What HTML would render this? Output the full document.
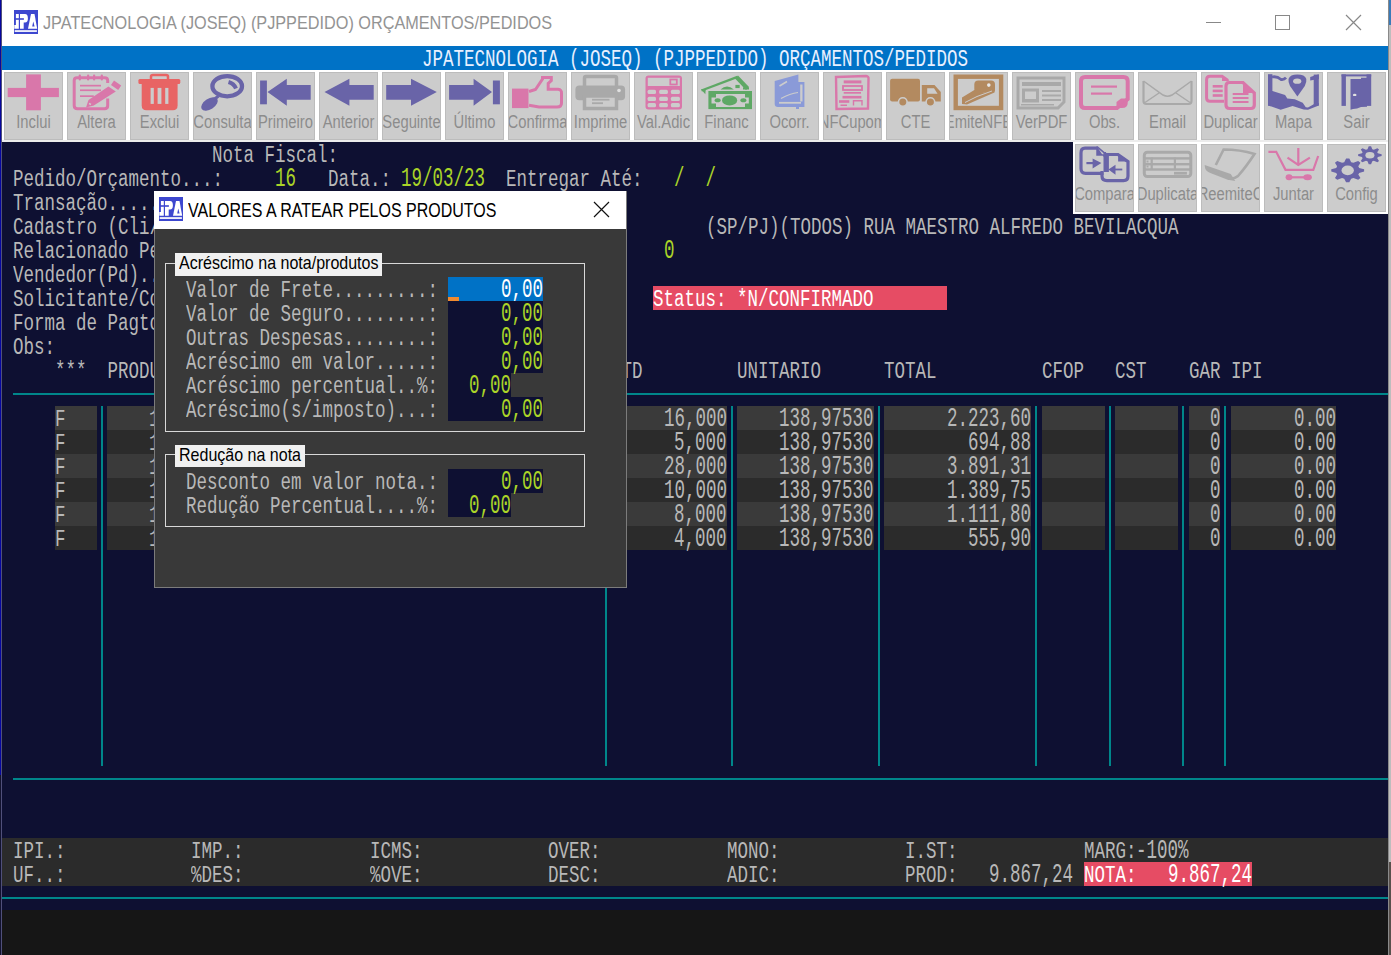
<!DOCTYPE html>
<html><head><meta charset="utf-8"><style>
*{margin:0;padding:0}
body{width:1391px;height:955px;overflow:hidden;position:relative;background:#0e1032}
.t{position:absolute;white-space:pre;font-family:"Liberation Mono",monospace;line-height:1.1328;transform-origin:0 0}
.r{position:absolute}
.s{position:absolute;white-space:pre;font-family:"Liberation Sans",sans-serif}
.lb{left:-20px;width:97px;text-align:center;font-size:18px;line-height:20px;color:#8c8c8c;transform:scaleX(0.82);transform-origin:50% 0}
</style></head>
<body>

<div class="r" style="left:0;top:0;width:1px;height:775px;background:#0606a0"></div><div class="r" style="left:0;top:775px;width:1px;height:180px;background:#12122e"></div><div class="r" style="left:1px;top:0;width:1px;height:955px;background:#50507a"></div>
<div class="r" style="left:2px;top:0;width:1386px;height:46px;background:#ffffff"></div>
<div class="r" style="left:1388px;top:0;width:1px;height:955px;background:#8a8a8a"></div>
<div class="r" style="left:1389px;top:0;width:2px;height:955px;background:#bdbdbd"></div>
<div class="r" style="left:1389px;top:0;width:2px;height:25px;background:#3a7ab8"></div><div class="r" style="left:1389px;top:862px;width:2px;height:93px;background:#58504c"></div>
<svg class="r" style="left:14px;top:10px" width="24" height="24" viewBox="0 0 24 24"><rect width="24" height="24" fill="#3d47cf"/><path d="M1.9,4 H4.8 V18.8 H0.3 V15 H1.9Z" fill="#fff"/><path d="M6,4 H11 Q13.9,4 13.9,8.3 Q13.9,12.6 11,12.6 H9.7 V18.8 H6Z" fill="#fff"/><rect x="0.9" y="8.2" width="9" height="1.6" fill="#3d47cf"/><path d="M17,4 H20.5 L23.2,18.8 H14Z" fill="#fff"/><path d="M19.3,11.5 L20.6,16.5 H18.2Z" fill="#3d47cf"/><rect x="0.7" y="20.2" width="22.2" height="1.7" fill="#fff"/></svg>
<div class="s" style="left:43px;top:12.2px;font-size:19px;line-height:22px;color:#939393;transform:scaleX(0.855);transform-origin:0 0">JPATECNOLOGIA (JOSEQ) (PJPPEDIDO) ORÇAMENTOS/PEDIDOS</div>
<div class="r" style="left:1206px;top:22px;width:15px;height:1px;background:#888"></div>
<div class="r" style="left:1275px;top:15px;width:13px;height:13px;border:1px solid #888"></div>
<svg class="r" style="left:1345px;top:14px" width="17" height="17"><path d="M1,1 L16,16 M16,1 L1,16" stroke="#888" stroke-width="1.2"/></svg>

<div class="r" style="left:2.00px;top:46.00px;width:1386.00px;height:864.00px;background:#0e1032;"></div><div class="r" style="left:2.00px;top:910.00px;width:1386.00px;height:45.00px;background:#161616;"></div><div class="r" style="left:2.00px;top:46.00px;width:1386.00px;height:24.00px;background:#0072c6;"></div><div class="t" style="left:422.00px;top:47.35px;font-size:23px;color:#e8f0ff;transform:scaleX(0.7609);">JPATECNOLOGIA (JOSEQ) (PJPPEDIDO) ORÇAMENTOS/PEDIDOS</div><div class="t" style="left:212.00px;top:143.35px;font-size:23px;color:#b8b8b8;transform:scaleX(0.7609);">Nota Fiscal:</div><div class="t" style="left:12.50px;top:167.35px;font-size:23px;color:#b8b8b8;transform:scaleX(0.7609);">Pedido/Orçamento...:</div><div class="t" style="left:275.00px;top:162.86px;font-size:28.4px;color:#aad428;transform:scaleX(0.6162);">16</div><div class="t" style="left:327.50px;top:167.35px;font-size:23px;color:#b8b8b8;transform:scaleX(0.7609);">Data.:</div><div class="t" style="left:401.00px;top:162.86px;font-size:28.4px;color:#aad428;transform:scaleX(0.6162);">19/03/23</div><div class="t" style="left:506.00px;top:167.35px;font-size:23px;color:#b8b8b8;transform:scaleX(0.7609);">Entregar Até:</div><div class="t" style="left:674.00px;top:162.86px;font-size:28.4px;color:#aad428;transform:scaleX(0.6162);">/  /</div><div class="t" style="left:12.50px;top:191.35px;font-size:23px;color:#b8b8b8;transform:scaleX(0.7609);">Transação..........:</div><div class="t" style="left:12.50px;top:215.35px;font-size:23px;color:#b8b8b8;transform:scaleX(0.7609);">Cadastro (Cli/For).:</div><div class="t" style="left:705.50px;top:215.35px;font-size:23px;color:#b8b8b8;transform:scaleX(0.7609);">(SP/PJ)(TODOS) RUA MAESTRO ALFREDO BEVILACQUA</div><div class="t" style="left:12.50px;top:239.35px;font-size:23px;color:#b8b8b8;transform:scaleX(0.7609);">Relacionado Pedido.:</div><div class="t" style="left:663.50px;top:234.86px;font-size:28.4px;color:#aad428;transform:scaleX(0.6162);">0</div><div class="t" style="left:12.50px;top:263.35px;font-size:23px;color:#b8b8b8;transform:scaleX(0.7609);">Vendedor(Pd).......:</div><div class="t" style="left:12.50px;top:287.35px;font-size:23px;color:#b8b8b8;transform:scaleX(0.7609);">Solicitante/Contato:</div><div class="r" style="left:653.00px;top:286.00px;width:294.00px;height:24.00px;background:#e64c64;"></div><div class="t" style="left:653.00px;top:287.35px;font-size:23px;color:#ffffff;transform:scaleX(0.7609);">Status: *N/CONFIRMADO</div><div class="t" style="left:12.50px;top:311.35px;font-size:23px;color:#b8b8b8;transform:scaleX(0.7609);">Forma de Pagto.....:</div><div class="t" style="left:12.50px;top:335.35px;font-size:23px;color:#b8b8b8;transform:scaleX(0.7609);">Obs:</div><div class="t" style="left:54.50px;top:359.35px;font-size:23px;color:#b8b8b8;transform:scaleX(0.7609);">***  PRODUTO</div><div class="t" style="left:611.00px;top:359.35px;font-size:23px;color:#b8b8b8;transform:scaleX(0.7609);">QTD</div><div class="t" style="left:737.00px;top:359.35px;font-size:23px;color:#b8b8b8;transform:scaleX(0.7609);">UNITARIO</div><div class="t" style="left:884.00px;top:359.35px;font-size:23px;color:#b8b8b8;transform:scaleX(0.7609);">TOTAL</div><div class="t" style="left:1041.50px;top:359.35px;font-size:23px;color:#b8b8b8;transform:scaleX(0.7609);">CFOP</div><div class="t" style="left:1115.00px;top:359.35px;font-size:23px;color:#b8b8b8;transform:scaleX(0.7609);">CST</div><div class="t" style="left:1188.50px;top:359.35px;font-size:23px;color:#b8b8b8;transform:scaleX(0.7609);">GAR IPI</div><div class="r" style="left:12.50px;top:393.00px;width:1375.50px;height:2.00px;background:#00868a;"></div><div class="r" style="left:12.50px;top:778.00px;width:1375.50px;height:2.00px;background:#00868a;"></div><div class="r" style="left:54.50px;top:406.00px;width:42.00px;height:24.00px;background:#3a3a3a;"></div><div class="r" style="left:107.00px;top:406.00px;width:493.50px;height:24.00px;background:#3a3a3a;"></div><div class="r" style="left:611.00px;top:406.00px;width:115.50px;height:24.00px;background:#3a3a3a;"></div><div class="r" style="left:737.00px;top:406.00px;width:136.50px;height:24.00px;background:#3a3a3a;"></div><div class="r" style="left:884.00px;top:406.00px;width:147.00px;height:24.00px;background:#3a3a3a;"></div><div class="r" style="left:1041.50px;top:406.00px;width:63.00px;height:24.00px;background:#3a3a3a;"></div><div class="r" style="left:1115.00px;top:406.00px;width:63.00px;height:24.00px;background:#3a3a3a;"></div><div class="r" style="left:1188.50px;top:406.00px;width:31.50px;height:24.00px;background:#3a3a3a;"></div><div class="r" style="left:1230.50px;top:406.00px;width:105.00px;height:24.00px;background:#3a3a3a;"></div><div class="t" style="left:54.50px;top:407.35px;font-size:23px;color:#b8b8b8;transform:scaleX(0.7609);">F</div><div class="t" style="left:149.00px;top:407.35px;font-size:23px;color:#b8b8b8;transform:scaleX(0.7609);">1</div><div class="t" style="left:663.50px;top:402.86px;font-size:28.4px;color:#b8b8b8;transform:scaleX(0.6162);">16,000</div><div class="t" style="left:779.00px;top:402.86px;font-size:28.4px;color:#b8b8b8;transform:scaleX(0.6162);">138,97530</div><div class="t" style="left:947.00px;top:402.86px;font-size:28.4px;color:#b8b8b8;transform:scaleX(0.6162);">2.223,60</div><div class="t" style="left:1209.50px;top:402.86px;font-size:28.4px;color:#b8b8b8;transform:scaleX(0.6162);">0</div><div class="t" style="left:1293.50px;top:402.86px;font-size:28.4px;color:#b8b8b8;transform:scaleX(0.6162);">0.00</div><div class="r" style="left:54.50px;top:430.00px;width:42.00px;height:24.00px;background:#2b2b2b;"></div><div class="r" style="left:107.00px;top:430.00px;width:493.50px;height:24.00px;background:#2b2b2b;"></div><div class="r" style="left:611.00px;top:430.00px;width:115.50px;height:24.00px;background:#2b2b2b;"></div><div class="r" style="left:737.00px;top:430.00px;width:136.50px;height:24.00px;background:#2b2b2b;"></div><div class="r" style="left:884.00px;top:430.00px;width:147.00px;height:24.00px;background:#2b2b2b;"></div><div class="r" style="left:1041.50px;top:430.00px;width:63.00px;height:24.00px;background:#2b2b2b;"></div><div class="r" style="left:1115.00px;top:430.00px;width:63.00px;height:24.00px;background:#2b2b2b;"></div><div class="r" style="left:1188.50px;top:430.00px;width:31.50px;height:24.00px;background:#2b2b2b;"></div><div class="r" style="left:1230.50px;top:430.00px;width:105.00px;height:24.00px;background:#2b2b2b;"></div><div class="t" style="left:54.50px;top:431.35px;font-size:23px;color:#b8b8b8;transform:scaleX(0.7609);">F</div><div class="t" style="left:149.00px;top:431.35px;font-size:23px;color:#b8b8b8;transform:scaleX(0.7609);">1</div><div class="t" style="left:674.00px;top:426.86px;font-size:28.4px;color:#b8b8b8;transform:scaleX(0.6162);">5,000</div><div class="t" style="left:779.00px;top:426.86px;font-size:28.4px;color:#b8b8b8;transform:scaleX(0.6162);">138,97530</div><div class="t" style="left:968.00px;top:426.86px;font-size:28.4px;color:#b8b8b8;transform:scaleX(0.6162);">694,88</div><div class="t" style="left:1209.50px;top:426.86px;font-size:28.4px;color:#b8b8b8;transform:scaleX(0.6162);">0</div><div class="t" style="left:1293.50px;top:426.86px;font-size:28.4px;color:#b8b8b8;transform:scaleX(0.6162);">0.00</div><div class="r" style="left:54.50px;top:454.00px;width:42.00px;height:24.00px;background:#3a3a3a;"></div><div class="r" style="left:107.00px;top:454.00px;width:493.50px;height:24.00px;background:#3a3a3a;"></div><div class="r" style="left:611.00px;top:454.00px;width:115.50px;height:24.00px;background:#3a3a3a;"></div><div class="r" style="left:737.00px;top:454.00px;width:136.50px;height:24.00px;background:#3a3a3a;"></div><div class="r" style="left:884.00px;top:454.00px;width:147.00px;height:24.00px;background:#3a3a3a;"></div><div class="r" style="left:1041.50px;top:454.00px;width:63.00px;height:24.00px;background:#3a3a3a;"></div><div class="r" style="left:1115.00px;top:454.00px;width:63.00px;height:24.00px;background:#3a3a3a;"></div><div class="r" style="left:1188.50px;top:454.00px;width:31.50px;height:24.00px;background:#3a3a3a;"></div><div class="r" style="left:1230.50px;top:454.00px;width:105.00px;height:24.00px;background:#3a3a3a;"></div><div class="t" style="left:54.50px;top:455.35px;font-size:23px;color:#b8b8b8;transform:scaleX(0.7609);">F</div><div class="t" style="left:149.00px;top:455.35px;font-size:23px;color:#b8b8b8;transform:scaleX(0.7609);">1</div><div class="t" style="left:663.50px;top:450.86px;font-size:28.4px;color:#b8b8b8;transform:scaleX(0.6162);">28,000</div><div class="t" style="left:779.00px;top:450.86px;font-size:28.4px;color:#b8b8b8;transform:scaleX(0.6162);">138,97530</div><div class="t" style="left:947.00px;top:450.86px;font-size:28.4px;color:#b8b8b8;transform:scaleX(0.6162);">3.891,31</div><div class="t" style="left:1209.50px;top:450.86px;font-size:28.4px;color:#b8b8b8;transform:scaleX(0.6162);">0</div><div class="t" style="left:1293.50px;top:450.86px;font-size:28.4px;color:#b8b8b8;transform:scaleX(0.6162);">0.00</div><div class="r" style="left:54.50px;top:478.00px;width:42.00px;height:24.00px;background:#2b2b2b;"></div><div class="r" style="left:107.00px;top:478.00px;width:493.50px;height:24.00px;background:#2b2b2b;"></div><div class="r" style="left:611.00px;top:478.00px;width:115.50px;height:24.00px;background:#2b2b2b;"></div><div class="r" style="left:737.00px;top:478.00px;width:136.50px;height:24.00px;background:#2b2b2b;"></div><div class="r" style="left:884.00px;top:478.00px;width:147.00px;height:24.00px;background:#2b2b2b;"></div><div class="r" style="left:1041.50px;top:478.00px;width:63.00px;height:24.00px;background:#2b2b2b;"></div><div class="r" style="left:1115.00px;top:478.00px;width:63.00px;height:24.00px;background:#2b2b2b;"></div><div class="r" style="left:1188.50px;top:478.00px;width:31.50px;height:24.00px;background:#2b2b2b;"></div><div class="r" style="left:1230.50px;top:478.00px;width:105.00px;height:24.00px;background:#2b2b2b;"></div><div class="t" style="left:54.50px;top:479.35px;font-size:23px;color:#b8b8b8;transform:scaleX(0.7609);">F</div><div class="t" style="left:149.00px;top:479.35px;font-size:23px;color:#b8b8b8;transform:scaleX(0.7609);">1</div><div class="t" style="left:663.50px;top:474.86px;font-size:28.4px;color:#b8b8b8;transform:scaleX(0.6162);">10,000</div><div class="t" style="left:779.00px;top:474.86px;font-size:28.4px;color:#b8b8b8;transform:scaleX(0.6162);">138,97530</div><div class="t" style="left:947.00px;top:474.86px;font-size:28.4px;color:#b8b8b8;transform:scaleX(0.6162);">1.389,75</div><div class="t" style="left:1209.50px;top:474.86px;font-size:28.4px;color:#b8b8b8;transform:scaleX(0.6162);">0</div><div class="t" style="left:1293.50px;top:474.86px;font-size:28.4px;color:#b8b8b8;transform:scaleX(0.6162);">0.00</div><div class="r" style="left:54.50px;top:502.00px;width:42.00px;height:24.00px;background:#3a3a3a;"></div><div class="r" style="left:107.00px;top:502.00px;width:493.50px;height:24.00px;background:#3a3a3a;"></div><div class="r" style="left:611.00px;top:502.00px;width:115.50px;height:24.00px;background:#3a3a3a;"></div><div class="r" style="left:737.00px;top:502.00px;width:136.50px;height:24.00px;background:#3a3a3a;"></div><div class="r" style="left:884.00px;top:502.00px;width:147.00px;height:24.00px;background:#3a3a3a;"></div><div class="r" style="left:1041.50px;top:502.00px;width:63.00px;height:24.00px;background:#3a3a3a;"></div><div class="r" style="left:1115.00px;top:502.00px;width:63.00px;height:24.00px;background:#3a3a3a;"></div><div class="r" style="left:1188.50px;top:502.00px;width:31.50px;height:24.00px;background:#3a3a3a;"></div><div class="r" style="left:1230.50px;top:502.00px;width:105.00px;height:24.00px;background:#3a3a3a;"></div><div class="t" style="left:54.50px;top:503.35px;font-size:23px;color:#b8b8b8;transform:scaleX(0.7609);">F</div><div class="t" style="left:149.00px;top:503.35px;font-size:23px;color:#b8b8b8;transform:scaleX(0.7609);">1</div><div class="t" style="left:674.00px;top:498.86px;font-size:28.4px;color:#b8b8b8;transform:scaleX(0.6162);">8,000</div><div class="t" style="left:779.00px;top:498.86px;font-size:28.4px;color:#b8b8b8;transform:scaleX(0.6162);">138,97530</div><div class="t" style="left:947.00px;top:498.86px;font-size:28.4px;color:#b8b8b8;transform:scaleX(0.6162);">1.111,80</div><div class="t" style="left:1209.50px;top:498.86px;font-size:28.4px;color:#b8b8b8;transform:scaleX(0.6162);">0</div><div class="t" style="left:1293.50px;top:498.86px;font-size:28.4px;color:#b8b8b8;transform:scaleX(0.6162);">0.00</div><div class="r" style="left:54.50px;top:526.00px;width:42.00px;height:24.00px;background:#2b2b2b;"></div><div class="r" style="left:107.00px;top:526.00px;width:493.50px;height:24.00px;background:#2b2b2b;"></div><div class="r" style="left:611.00px;top:526.00px;width:115.50px;height:24.00px;background:#2b2b2b;"></div><div class="r" style="left:737.00px;top:526.00px;width:136.50px;height:24.00px;background:#2b2b2b;"></div><div class="r" style="left:884.00px;top:526.00px;width:147.00px;height:24.00px;background:#2b2b2b;"></div><div class="r" style="left:1041.50px;top:526.00px;width:63.00px;height:24.00px;background:#2b2b2b;"></div><div class="r" style="left:1115.00px;top:526.00px;width:63.00px;height:24.00px;background:#2b2b2b;"></div><div class="r" style="left:1188.50px;top:526.00px;width:31.50px;height:24.00px;background:#2b2b2b;"></div><div class="r" style="left:1230.50px;top:526.00px;width:105.00px;height:24.00px;background:#2b2b2b;"></div><div class="t" style="left:54.50px;top:527.35px;font-size:23px;color:#b8b8b8;transform:scaleX(0.7609);">F</div><div class="t" style="left:149.00px;top:527.35px;font-size:23px;color:#b8b8b8;transform:scaleX(0.7609);">1</div><div class="t" style="left:674.00px;top:522.86px;font-size:28.4px;color:#b8b8b8;transform:scaleX(0.6162);">4,000</div><div class="t" style="left:779.00px;top:522.86px;font-size:28.4px;color:#b8b8b8;transform:scaleX(0.6162);">138,97530</div><div class="t" style="left:968.00px;top:522.86px;font-size:28.4px;color:#b8b8b8;transform:scaleX(0.6162);">555,90</div><div class="t" style="left:1209.50px;top:522.86px;font-size:28.4px;color:#b8b8b8;transform:scaleX(0.6162);">0</div><div class="t" style="left:1293.50px;top:522.86px;font-size:28.4px;color:#b8b8b8;transform:scaleX(0.6162);">0.00</div><div class="r" style="left:100.75px;top:406.00px;width:2.00px;height:360.00px;background:#00868a;"></div><div class="r" style="left:604.75px;top:406.00px;width:2.00px;height:360.00px;background:#00868a;"></div><div class="r" style="left:730.75px;top:406.00px;width:2.00px;height:360.00px;background:#00868a;"></div><div class="r" style="left:877.75px;top:406.00px;width:2.00px;height:360.00px;background:#00868a;"></div><div class="r" style="left:1035.25px;top:406.00px;width:2.00px;height:360.00px;background:#00868a;"></div><div class="r" style="left:1108.75px;top:406.00px;width:2.00px;height:360.00px;background:#00868a;"></div><div class="r" style="left:1182.25px;top:406.00px;width:2.00px;height:360.00px;background:#00868a;"></div><div class="r" style="left:1224.25px;top:406.00px;width:2.00px;height:360.00px;background:#00868a;"></div><div class="r" style="left:2.00px;top:838.00px;width:1386.00px;height:48.00px;background:#2b2b2b;"></div><div class="r" style="left:2.00px;top:897.00px;width:1386.00px;height:2.00px;background:#00868a;"></div><div class="t" style="left:12.50px;top:839.35px;font-size:23px;color:#b8b8b8;transform:scaleX(0.7609);">IPI.:</div><div class="t" style="left:12.50px;top:863.35px;font-size:23px;color:#b8b8b8;transform:scaleX(0.7609);">UF..:</div><div class="t" style="left:191.00px;top:839.35px;font-size:23px;color:#b8b8b8;transform:scaleX(0.7609);">IMP.:</div><div class="t" style="left:191.00px;top:863.35px;font-size:23px;color:#b8b8b8;transform:scaleX(0.7609);">%DES:</div><div class="t" style="left:369.50px;top:839.35px;font-size:23px;color:#b8b8b8;transform:scaleX(0.7609);">ICMS:</div><div class="t" style="left:369.50px;top:863.35px;font-size:23px;color:#b8b8b8;transform:scaleX(0.7609);">%OVE:</div><div class="t" style="left:548.00px;top:839.35px;font-size:23px;color:#b8b8b8;transform:scaleX(0.7609);">OVER:</div><div class="t" style="left:548.00px;top:863.35px;font-size:23px;color:#b8b8b8;transform:scaleX(0.7609);">DESC:</div><div class="t" style="left:726.50px;top:839.35px;font-size:23px;color:#b8b8b8;transform:scaleX(0.7609);">MONO:</div><div class="t" style="left:726.50px;top:863.35px;font-size:23px;color:#b8b8b8;transform:scaleX(0.7609);">ADIC:</div><div class="t" style="left:905.00px;top:839.35px;font-size:23px;color:#b8b8b8;transform:scaleX(0.7609);">I.ST:</div><div class="t" style="left:905.00px;top:863.35px;font-size:23px;color:#b8b8b8;transform:scaleX(0.7609);">PROD:</div><div class="t" style="left:1083.50px;top:839.35px;font-size:23px;color:#b8b8b8;transform:scaleX(0.7609);">MARG:</div><div class="t" style="left:1136.00px;top:834.86px;font-size:28.4px;color:#b8b8b8;transform:scaleX(0.6162);">-100%</div><div class="t" style="left:989.00px;top:858.86px;font-size:28.4px;color:#b8b8b8;transform:scaleX(0.6162);">9.867,24</div><div class="r" style="left:1083.50px;top:862.00px;width:168.00px;height:24.00px;background:#e64c64;"></div><div class="t" style="left:1083.50px;top:863.35px;font-size:23px;color:#ffffff;transform:scaleX(0.7609);">NOTA:</div><div class="t" style="left:1167.50px;top:858.86px;font-size:28.4px;color:#ffffff;transform:scaleX(0.6162);">9.867,24</div>
<div class="r" style="left:2px;top:70px;width:1386px;height:72px;background:#ffffff"></div><div class="r" style="left:2px;top:140px;width:1386px;height:2px;background:#ececec"></div><div class="r" style="left:1073px;top:142px;width:315px;height:72px;background:#ffffff"></div><div class="r" style="left:4px;top:72px;width:57px;height:66px;background:#cccccc;border:1px solid #bcbcbc;overflow:hidden"><div class="s lb" style="top:39.1px">Inclui</div></div><div class="r" style="left:67px;top:72px;width:57px;height:66px;background:#cccccc;border:1px solid #bcbcbc;overflow:hidden"><div class="s lb" style="top:39.1px">Altera</div></div><div class="r" style="left:130px;top:72px;width:57px;height:66px;background:#cccccc;border:1px solid #bcbcbc;overflow:hidden"><div class="s lb" style="top:39.1px">Exclui</div></div><div class="r" style="left:193px;top:72px;width:57px;height:66px;background:#cccccc;border:1px solid #bcbcbc;overflow:hidden"><div class="s lb" style="top:39.1px">Consulta</div></div><div class="r" style="left:256px;top:72px;width:57px;height:66px;background:#cccccc;border:1px solid #bcbcbc;overflow:hidden"><div class="s lb" style="top:39.1px">Primeiro</div></div><div class="r" style="left:319px;top:72px;width:57px;height:66px;background:#cccccc;border:1px solid #bcbcbc;overflow:hidden"><div class="s lb" style="top:39.1px">Anterior</div></div><div class="r" style="left:382px;top:72px;width:57px;height:66px;background:#cccccc;border:1px solid #bcbcbc;overflow:hidden"><div class="s lb" style="top:39.1px">Seguinte</div></div><div class="r" style="left:445px;top:72px;width:57px;height:66px;background:#cccccc;border:1px solid #bcbcbc;overflow:hidden"><div class="s lb" style="top:39.1px">Último</div></div><div class="r" style="left:508px;top:72px;width:57px;height:66px;background:#cccccc;border:1px solid #bcbcbc;overflow:hidden"><div class="s lb" style="top:39.1px">Confirma</div></div><div class="r" style="left:571px;top:72px;width:57px;height:66px;background:#cccccc;border:1px solid #bcbcbc;overflow:hidden"><div class="s lb" style="top:39.1px">Imprime</div></div><div class="r" style="left:634px;top:72px;width:57px;height:66px;background:#cccccc;border:1px solid #bcbcbc;overflow:hidden"><div class="s lb" style="top:39.1px">Val.Adic</div></div><div class="r" style="left:697px;top:72px;width:57px;height:66px;background:#cccccc;border:1px solid #bcbcbc;overflow:hidden"><div class="s lb" style="top:39.1px">Financ</div></div><div class="r" style="left:760px;top:72px;width:57px;height:66px;background:#cccccc;border:1px solid #bcbcbc;overflow:hidden"><div class="s lb" style="top:39.1px">Ocorr.</div></div><div class="r" style="left:823px;top:72px;width:57px;height:66px;background:#cccccc;border:1px solid #bcbcbc;overflow:hidden"><div class="s lb" style="top:39.1px">NFCupom</div></div><div class="r" style="left:886px;top:72px;width:57px;height:66px;background:#cccccc;border:1px solid #bcbcbc;overflow:hidden"><div class="s lb" style="top:39.1px">CTE</div></div><div class="r" style="left:949px;top:72px;width:57px;height:66px;background:#cccccc;border:1px solid #bcbcbc;overflow:hidden"><div class="s lb" style="top:39.1px">EmiteNFE</div></div><div class="r" style="left:1012px;top:72px;width:57px;height:66px;background:#cccccc;border:1px solid #bcbcbc;overflow:hidden"><div class="s lb" style="top:39.1px">VerPDF</div></div><div class="r" style="left:1075px;top:72px;width:57px;height:66px;background:#cccccc;border:1px solid #bcbcbc;overflow:hidden"><div class="s lb" style="top:39.1px">Obs.</div></div><div class="r" style="left:1138px;top:72px;width:57px;height:66px;background:#cccccc;border:1px solid #bcbcbc;overflow:hidden"><div class="s lb" style="top:39.1px">Email</div></div><div class="r" style="left:1201px;top:72px;width:57px;height:66px;background:#cccccc;border:1px solid #bcbcbc;overflow:hidden"><div class="s lb" style="top:39.1px">Duplicar</div></div><div class="r" style="left:1264px;top:72px;width:57px;height:66px;background:#cccccc;border:1px solid #bcbcbc;overflow:hidden"><div class="s lb" style="top:39.1px">Mapa</div></div><div class="r" style="left:1327px;top:72px;width:57px;height:66px;background:#cccccc;border:1px solid #bcbcbc;overflow:hidden"><div class="s lb" style="top:39.1px">Sair</div></div><div class="r" style="left:1075px;top:144px;width:57px;height:66px;background:#cccccc;border:1px solid #bcbcbc;overflow:hidden"><div class="s lb" style="top:39.1px">Compara</div></div><div class="r" style="left:1138px;top:144px;width:57px;height:66px;background:#cccccc;border:1px solid #bcbcbc;overflow:hidden"><div class="s lb" style="top:39.1px">Duplicata</div></div><div class="r" style="left:1201px;top:144px;width:57px;height:66px;background:#cccccc;border:1px solid #bcbcbc;overflow:hidden"><div class="s lb" style="top:39.1px">ReemiteC</div></div><div class="r" style="left:1264px;top:144px;width:57px;height:66px;background:#cccccc;border:1px solid #bcbcbc;overflow:hidden"><div class="s lb" style="top:39.1px">Juntar</div></div><div class="r" style="left:1327px;top:144px;width:57px;height:66px;background:#cccccc;border:1px solid #bcbcbc;overflow:hidden"><div class="s lb" style="top:39.1px">Config</div></div><svg class="r" style="left:0;top:0" width="1391" height="955" viewBox="0 0 1391 955"><rect x="7.7" y="87.9" width="51.2" height="9.2" fill="#d977aa"/><rect x="26.1" y="74.4" width="14.8" height="35.9" fill="#d977aa"/><path d="M107.7,83 V80.5 Q107.7,77.7 104.5,77.7 H77 Q74.2,77.7 74.2,80.5 V105.5 Q74.2,108.8 77.5,108.8 H104.5 Q107.7,108.8 107.7,105.5 V98.4" fill="none" stroke="#d977aa" stroke-width="3"/><rect x="78.7" y="74.6" width="2.2" height="5.8" rx="1" fill="#d977aa"/><rect x="87.0" y="74.6" width="2.2" height="5.8" rx="1" fill="#d977aa"/><rect x="93.0" y="74.6" width="2.2" height="5.8" rx="1" fill="#d977aa"/><rect x="100.7" y="74.6" width="2.2" height="5.8" rx="1" fill="#d977aa"/><rect x="80" y="84.8" width="21" height="1.7" fill="#d977aa"/><rect x="80" y="89.4" width="21" height="1.7" fill="#d977aa"/><rect x="80" y="95.3" width="13.8" height="1.7" fill="#d977aa"/><polygon points="86,107.5 88.5,100 108.4,86.5 115.8,91.4 93.8,105.6" fill="#d977aa"/><polygon points="111,85 114,80.5 121.2,85.5 118.2,90" fill="#d977aa"/><path d="M89,103.5 L91,104.5" stroke="#cccccc" stroke-width="1.4"/><path d="M151,79.5 V76.5 Q151,75 153,75 H166 Q168,75 168,76.5 V79.5" fill="none" stroke="#e86464" stroke-width="2.5"/><rect x="138.4" y="79" width="41.9" height="5" rx="1.5" fill="#e86464"/><path d="M141.7,83.5 H177.6 V105.5 Q177.6,110.3 172.8,110.3 H146.5 Q141.7,110.3 141.7,105.5 Z" fill="#e86464"/><rect x="150.6" y="87.9" width="3.2" height="16" fill="#cccccc"/><rect x="157.6" y="87.9" width="3.8" height="16" fill="#cccccc"/><rect x="165.2" y="87.9" width="3.2" height="16" fill="#cccccc"/><ellipse cx="227.2" cy="86.2" rx="14.8" ry="10.1" fill="none" stroke="#6964a8" stroke-width="4.3"/><path d="M228.5,82 Q234,83.5 236,88.5" fill="none" stroke="#6964a8" stroke-width="4"/><ellipse cx="209.5" cy="104" rx="9.3" ry="5.3" transform="rotate(-33 209.5 104)" fill="#6964a8"/><path d="M214,99.5 L218.5,96" stroke="#6964a8" stroke-width="3"/><rect x="260.1" y="80.5" width="6.8" height="23.8" fill="#6964a8"/><polygon points="267.5,92 286.8,78.7 286.8,85 310.7,85 310.7,99.7 286.8,99.7 286.8,105.7" fill="#6964a8"/><polygon points="324.5,92 349.4,78.7 349.4,85 373.7,85 373.7,99.7 349.4,99.7 349.4,105.7" fill="#6964a8"/><polygon points="386.2,85 411,85 411,78.7 436.8,92 411,105.7 411,99.7 386.2,99.7" fill="#6964a8"/><polygon points="449.1,85 473.6,85 473.6,78.7 492,92 473.6,105.7 473.6,99.7 449.1,99.7" fill="#6964a8"/><rect x="492.9" y="80.5" width="7" height="23.8" fill="#6964a8"/><rect x="512" y="88.6" width="16.5" height="19.5" fill="#d977aa"/><path d="M529,91.5 L535.5,89.5 L542.5,79 V77.6 H551.3 V80.5 L548.2,83.5 V89.3 H558 Q562,89.8 561.5,93.5 V103 Q561.5,107 557,107 H539 L529,105.2" fill="none" stroke="#d977aa" stroke-width="3"/><path d="M584.5,87 V78 Q584.5,76.5 586,76.5 H614.5 Q616.5,76.5 616.5,78 V87" fill="none" stroke="#a9a9a9" stroke-width="3.5"/><rect x="575.4" y="85.5" width="49.7" height="14.7" rx="4" fill="#a9a9a9"/><circle cx="619" cy="90.5" r="1.8" fill="#e0e0e0"/><rect x="584.5" y="96" width="32" height="12.5" fill="#cccccc" stroke="#a9a9a9" stroke-width="3.5"/><rect x="592" y="98.8" width="17.5" height="1.8" fill="#a9a9a9"/><rect x="592" y="102.3" width="11" height="1.8" fill="#a9a9a9"/><rect x="645.5" y="75.5" width="36.5" height="34" rx="3" fill="#d977aa"/><rect x="647.8" y="77.8" width="32" height="8.2" fill="#cccccc"/><rect x="670.3" y="79.5" width="6.5" height="5" fill="none" stroke="#d977aa" stroke-width="1.8"/><rect x="647.6" y="89.7" width="8.4" height="4.2" rx="1.5" fill="#cccccc"/><rect x="659.2" y="89.7" width="8.7" height="4.2" rx="1.5" fill="#cccccc"/><rect x="670.9" y="89.7" width="9" height="4.2" rx="1.5" fill="#cccccc"/><rect x="647.6" y="96.8" width="8.4" height="4.2" rx="1.5" fill="#cccccc"/><rect x="659.2" y="96.8" width="8.7" height="4.2" rx="1.5" fill="#cccccc"/><rect x="670.9" y="96.8" width="9" height="4.2" rx="1.5" fill="#cccccc"/><rect x="647.6" y="103.1" width="8.4" height="4.2" rx="1.5" fill="#cccccc"/><rect x="659.2" y="103.1" width="8.7" height="4.2" rx="1.5" fill="#cccccc"/><rect x="670.9" y="103.1" width="9" height="4.2" rx="1.5" fill="#cccccc"/><path d="M701.5,90.5 L737.5,76.8" stroke="#5ea865" stroke-width="2.4"/><path d="M736.5,77 L747.5,88.5" stroke="#5ea865" stroke-width="4.2"/><rect x="743" y="87.3" width="6" height="2.2" fill="#5ea865"/><polygon points="701,89.3 705.8,89 705.3,94.2" fill="#5ea865"/><path d="M720.5,89.6 Q727,83.3 733.8,89.6 Z" fill="#5ea865"/><rect x="735.4" y="84.9" width="4.3" height="3.2" fill="#5ea865"/><rect x="708.4" y="91" width="43.6" height="18.1" fill="#5ea865"/><path d="M711.5,97.5 H716 V94 H745 V97.5 H748.8 V103.5 H745 V107 H716 V103.5 H711.5 Z" fill="#cccccc"/><ellipse cx="729.6" cy="100.4" rx="7.6" ry="5" fill="#5ea865"/><ellipse cx="717.6" cy="100.3" rx="3" ry="2" fill="#5ea865"/><ellipse cx="743.4" cy="100.3" rx="3" ry="2" fill="#5ea865"/><path d="M774.7,81 L798.4,74.5 V107 H778 Q774.7,107 774.7,104 Z" fill="#8a9ad8"/><rect x="798" y="82" width="6.4" height="25" fill="#8a9ad8"/><rect x="800.2" y="84.5" width="2.3" height="17" fill="#cccccc"/><path d="M779,102.8 H801" stroke="#cccccc" stroke-width="1.8"/><path d="M779.5,86 L787,81.5" stroke="#cccccc" stroke-width="1.6"/><path d="M781,98.5 Q790,93.5 798,92.5" fill="none" stroke="#cccccc" stroke-width="1.2"/><rect x="796" y="107" width="3" height="2" fill="#8a9ad8"/><path d="M836,77 L866,76 Q869,76.5 868.5,79 L868,108.5 L836.5,109 Z" fill="none" stroke="#d977aa" stroke-width="2.4"/><rect x="843.7" y="80.4" width="17.7" height="3" fill="#d977aa"/><rect x="843" y="86" width="19" height="4" fill="none" stroke="#d977aa" stroke-width="1.8"/><rect x="843.7" y="92" width="17.3" height="1.7" fill="#d977aa"/><rect x="842.5" y="95.9" width="18.9" height="2.6" fill="#d977aa"/><rect x="839" y="100.2" width="10.3" height="2.6" fill="#d977aa"/><rect x="840.5" y="104.5" width="6.5" height="1.5" fill="#d977aa"/><path d="M853.5,105.5 V100.8 H862 V105.5" fill="none" stroke="#d977aa" stroke-width="1.4"/><rect x="890.1" y="78.8" width="29.9" height="22.6" rx="2" fill="#b38a60"/><path d="M921.8,85.1 H934.5 L940.8,92 V101.4 H921.8 Z" fill="#b38a60"/><path d="M927.2,88.3 H934 L937.6,93.7 H927.2 Z" fill="#cccccc"/><circle cx="902.8" cy="102" r="4.3" fill="#b38a60" stroke="#cccccc" stroke-width="1.6"/><circle cx="930.4" cy="102" r="4.3" fill="#b38a60" stroke="#cccccc" stroke-width="1.6"/><rect x="955.7" y="76.7" width="45.4" height="31.3" fill="none" stroke="#b38a60" stroke-width="4.4"/><rect x="974.3" y="80.6" width="20.7" height="12.2" rx="4" fill="#b38a60"/><polygon points="962,97.5 976,89 984,92.8 995,89 994.5,92.5 983,97.5 967,104.5 962,104" fill="#b38a60"/><circle cx="988.8" cy="85.1" r="1.8" fill="#e8e8e8"/><path d="M965,102.5 L977,96.5 L992,91" fill="none" stroke="#cccccc" stroke-width="1"/><path d="M1018,78 H1064 V102 L1058,108 H1018 Z" fill="none" stroke="#a9a9a9" stroke-width="3"/><rect x="1022" y="82" width="39" height="4" fill="#a9a9a9"/><rect x="1022" y="88.5" width="17" height="14" fill="#a9a9a9"/><rect x="1025" y="91.5" width="11" height="7.5" fill="#cccccc"/><rect x="1042" y="90" width="19" height="2" fill="#a9a9a9"/><rect x="1042" y="94.5" width="19" height="2" fill="#a9a9a9"/><rect x="1042" y="99" width="19" height="2" fill="#a9a9a9"/><rect x="1021" y="104" width="33" height="1.5" fill="#a9a9a9"/><path d="M1085,77 H1123.5 Q1127.7,77 1127.7,81 V99 L1117,108 H1085 Q1081,108 1081,104 V81 Q1081,77 1085,77 Z" fill="none" stroke="#d977aa" stroke-width="4"/><path d="M1127.7,99 V103 Q1127.7,108 1122,108 H1117 Z" fill="#d977aa"/><polygon points="1127,98.5 1116.5,108 1116.5,102 1121,98.5" fill="#d977aa"/><rect x="1091" y="85.5" width="26" height="2.2" fill="#d977aa"/><rect x="1091" y="92.5" width="21" height="2.2" fill="#d977aa"/><path d="M1143.5,81 V101 Q1143.5,104 1146.5,104 H1188.5 Q1191.5,104 1191.5,101 V81" fill="none" stroke="#a9a9a9" stroke-width="2.2"/><path d="M1143.5,81 L1163,95 Q1167.5,97.5 1172,95 L1191.5,81 M1145,102.5 L1159,93 M1190,102.5 L1176,93" fill="none" stroke="#a9a9a9" stroke-width="1.5"/><path d="M1224,101.3 H1209.8 Q1206.6,101.3 1206.6,98 V79.5 Q1206.6,76.3 1209.8,76.3 H1222 L1228,80.5" fill="none" stroke="#d977aa" stroke-width="3"/><polygon points="1222,75 1229.5,81 1222,81" fill="#d977aa"/><rect x="1212.7" y="85" width="10" height="2.6" fill="#d977aa"/><rect x="1212.7" y="89.6" width="10" height="2.6" fill="#d977aa"/><rect x="1212.7" y="94.2" width="10" height="2.6" fill="#d977aa"/><path d="M1226,86 Q1226,82.5 1229.5,82.5 H1243 L1254.3,93 V105 Q1254.3,108.5 1250.8,108.5 H1229.5 Q1226,108.5 1226,105 Z" fill="none" stroke="#d977aa" stroke-width="3.2"/><polygon points="1243,82.5 1254.3,93 1243,93" fill="#d977aa"/><rect x="1232.7" y="93" width="15.8" height="2" fill="#d977aa"/><rect x="1232.7" y="97" width="15.8" height="2" fill="#d977aa"/><rect x="1232.7" y="101" width="15.8" height="2" fill="#d977aa"/><rect x="1268" y="74.2" width="4.4" height="31.5" fill="#6964a8"/><path d="M1272,77 Q1277,76 1281,79.5 Q1284,80 1286,77.7" fill="none" stroke="#6964a8" stroke-width="2.8"/><polygon points="1268,90.9 1272.4,90.9 1285.1,94.9 1287.3,98.4 1294.8,99.3 1302.7,102.8 1305.8,107.2 1308,107.6 1314.6,103.7 1318.8,103 1318.8,105.4 1308,109.8 1303.6,109.4 1292.6,105.9 1280.7,109.8 1268,105.4" fill="#6964a8"/><rect x="1313.7" y="74.6" width="5.1" height="31" fill="#6964a8"/><polygon points="1310.2,77 1318.8,74.2 1318.8,79 1310.2,80.5" fill="#6964a8"/><path d="M1297.4,96.6 L1290,86 Q1288,82 1288.5,79 Q1290,74.6 1297.4,74.6 Q1304.8,74.6 1306.3,79 Q1306.8,82 1304.8,86 Z" fill="#6964a8"/><ellipse cx="1297.2" cy="81.2" rx="4.1" ry="2.6" fill="#cccccc"/><rect x="1341.5" y="74.4" width="4.4" height="31.5" fill="#6964a8"/><rect x="1341.5" y="74.4" width="29.7" height="2" fill="#6964a8"/><rect x="1366.5" y="74.4" width="4.7" height="31.5" fill="#6964a8"/><polygon points="1350.5,79 1361,79 1361,77.7 1367,77.7 1367,106.8 1361,107 1357,108.5 1353,109 1350.5,109.8" fill="#6964a8"/><ellipse cx="1354.7" cy="94.9" rx="1.8" ry="1.2" fill="#e0e0e0"/><path d="M1097,148.2 H1085 Q1081,148.2 1081,153 V168.5 Q1081,173.3 1085.5,173.3 H1103.5" fill="none" stroke="#6964a8" stroke-width="3.2"/><path d="M1097,146.6 L1105.8,154.1 V160 M1097,146.6 V155 H1105.8" fill="#6964a8" stroke="#6964a8" stroke-width="1.5"/><rect x="1103.5" y="152" width="2.6" height="20" fill="#6964a8"/><path d="M1107,154.5 H1118 L1128,161.6 V176 Q1128,180.6 1123.5,180.6 H1107 Q1102,180.6 1102,176 V171" fill="none" stroke="#6964a8" stroke-width="3.2"/><rect x="1105.4" y="153" width="3.5" height="19" fill="#6964a8"/><polygon points="1118.1,154.1 1129.1,161.6 1118.1,161.6" fill="#6964a8"/><rect x="1086.4" y="162" width="8" height="2.2" fill="#6964a8"/><polygon points="1092.6,158.5 1101.4,163.1 1092.6,168.6" fill="#6964a8"/><rect x="1114" y="168.6" width="8.3" height="1.8" fill="#6964a8"/><polygon points="1108.4,169.5 1115.5,164.7 1115.5,174.8" fill="#6964a8"/><rect x="1144.3" y="152.3" width="46.5" height="24.2" rx="3" fill="none" stroke="#a9a9a9" stroke-width="3"/><rect x="1143" y="157.2" width="49" height="2.4" fill="#a9a9a9"/><rect x="1143" y="163" width="49" height="2.4" fill="#a9a9a9"/><rect x="1143" y="168.3" width="49" height="2.4" fill="#a9a9a9"/><rect x="1150.6" y="157.5" width="2.2" height="12" fill="#a9a9a9"/><rect x="1173.8" y="157.5" width="2.2" height="12" fill="#a9a9a9"/><rect x="1146.5" y="160.5" width="2" height="2" fill="#a9a9a9"/><rect x="1146.5" y="165.5" width="2" height="2" fill="#a9a9a9"/><rect x="1174" y="171.9" width="12.9" height="2.7" fill="#a9a9a9"/><path d="M1215.8,165 L1223.6,149.5 Q1240,149.5 1254.5,154 Q1246,167 1238,176 Q1234,179.5 1228,178.5" fill="none" stroke="#a9a9a9" stroke-width="2.6"/><path d="M1205.9,166.5 Q1206,170.5 1212,172.5 L1228,178.8 L1233,179.5 L1230,175 L1213,169 Z" fill="#a9a9a9" stroke="#a9a9a9" stroke-width="2.2"/><path d="M1268.4,151.8 H1276.2 L1285.5,169.8 H1313.3 L1318.2,156" fill="none" stroke="#d977aa" stroke-width="2.2"/><path d="M1298.3,148 V165 M1287.5,157.6 L1298.3,165 L1309.9,157.6" fill="none" stroke="#d977aa" stroke-width="2.2"/><rect x="1287" y="176.2" width="22" height="2.2" fill="#d977aa"/><ellipse cx="1289" cy="177.3" rx="3.4" ry="3" fill="#d977aa"/><ellipse cx="1307.6" cy="177.3" rx="4.3" ry="3" fill="#d977aa"/><polygon points="1364.12,169.22 1364.12,171.58 1359.18,172.90 1358.28,174.45 1360.45,178.01 1358.17,179.68 1353.36,177.98 1351.18,178.63 1349.32,182.34 1346.08,182.34 1344.22,178.63 1342.04,177.98 1337.23,179.68 1334.95,178.01 1337.12,174.45 1336.22,172.90 1331.28,171.58 1331.28,169.22 1336.22,167.90 1337.12,166.35 1334.95,162.79 1337.23,161.12 1342.04,162.82 1344.22,162.17 1346.08,158.46 1349.32,158.46 1351.18,162.17 1353.36,162.82 1358.17,161.12 1360.45,162.79 1358.28,166.35 1359.18,167.90" fill="#6964a8"/><ellipse cx="1347.7" cy="170.4" rx="6.2" ry="4.8" fill="#cccccc"/><polygon points="1381.64,154.31 1381.64,156.09 1377.84,157.03 1377.22,158.17 1379.02,160.97 1377.39,162.23 1373.81,160.76 1372.31,161.23 1371.06,164.26 1368.74,164.26 1367.49,161.23 1365.99,160.76 1362.41,162.23 1360.78,160.97 1362.58,158.17 1361.96,157.03 1358.16,156.09 1358.16,154.31 1361.96,153.37 1362.58,152.23 1360.78,149.43 1362.41,148.17 1365.99,149.64 1367.49,149.17 1368.74,146.14 1371.06,146.14 1372.31,149.17 1373.81,149.64 1377.39,148.17 1379.02,149.43 1377.22,152.23 1377.84,153.37" fill="#6964a8"/><ellipse cx="1369.9" cy="155.2" rx="4.5" ry="3.2" fill="#cccccc"/></svg><div class="r" style="left:154px;top:191px;width:471px;height:396px;background:#393939;border:1px solid #7c7c7c;border-top:none"></div><div class="r" style="left:154px;top:191px;width:472px;height:38px;background:#ffffff"></div><svg class="r" style="left:159px;top:197px" width="24" height="24" viewBox="0 0 24 24"><rect width="24" height="24" fill="#3d47cf"/><path d="M1.9,4 H4.8 V18.8 H0.3 V15 H1.9Z" fill="#fff"/><path d="M6,4 H11 Q13.9,4 13.9,8.3 Q13.9,12.6 11,12.6 H9.7 V18.8 H6Z" fill="#fff"/><rect x="0.9" y="8.2" width="9" height="1.6" fill="#3d47cf"/><path d="M17,4 H20.5 L23.2,18.8 H14Z" fill="#fff"/><path d="M19.3,11.5 L20.6,16.5 H18.2Z" fill="#3d47cf"/><rect x="0.7" y="20.2" width="22.2" height="1.7" fill="#fff"/></svg><div class="s" style="left:188px;top:199.2px;font-size:19.5px;line-height:22px;color:#000;transform:scaleX(0.82);transform-origin:0 0">VALORES A RATEAR PELOS PRODUTOS</div><svg class="r" style="left:593px;top:201px" width="17" height="17"><path d="M1,1 L16,16 M16,1 L1,16" stroke="#111" stroke-width="1.2"/></svg><div class="r" style="left:165px;top:263px;width:418px;height:167px;border:1px solid #d8d8d8"></div><div class="r" style="left:165px;top:454px;width:418px;height:71px;border:1px solid #d8d8d8"></div><div class="r" style="left:175px;top:253px;width:207px;height:23px;background:#f0f0f0"></div><div class="s" style="left:178.5px;top:251.5px;font-size:18.5px;line-height:22px;color:#000;transform:scaleX(0.866);transform-origin:0 0">Acréscimo na nota/produtos</div><div class="r" style="left:175px;top:445px;width:130px;height:22px;background:#f0f0f0"></div><div class="s" style="left:178.5px;top:443.5px;font-size:18.5px;line-height:22px;color:#000;transform:scaleX(0.866);transform-origin:0 0">Redução na nota</div><div class="t" style="left:185.50px;top:278.35px;font-size:23px;color:#b8b8b8;transform:scaleX(0.7609)">Valor de Frete.........:</div><div class="r" style="left:448.00px;top:277px;width:94.50px;height:24px;background:#0072c6"></div><div class="t" style="left:500.50px;top:273.86px;font-size:28.4px;color:#ffffff;transform:scaleX(0.6162)">0,00</div><div class="t" style="left:185.50px;top:302.35px;font-size:23px;color:#b8b8b8;transform:scaleX(0.7609)">Valor de Seguro........:</div><div class="r" style="left:448.00px;top:301px;width:94.50px;height:24px;background:#0e1032"></div><div class="t" style="left:500.50px;top:297.86px;font-size:28.4px;color:#aad428;transform:scaleX(0.6162)">0,00</div><div class="t" style="left:185.50px;top:326.35px;font-size:23px;color:#b8b8b8;transform:scaleX(0.7609)">Outras Despesas........:</div><div class="r" style="left:448.00px;top:325px;width:94.50px;height:24px;background:#0e1032"></div><div class="t" style="left:500.50px;top:321.86px;font-size:28.4px;color:#aad428;transform:scaleX(0.6162)">0,00</div><div class="t" style="left:185.50px;top:350.35px;font-size:23px;color:#b8b8b8;transform:scaleX(0.7609)">Acréscimo em valor.....:</div><div class="r" style="left:448.00px;top:349px;width:94.50px;height:24px;background:#0e1032"></div><div class="t" style="left:500.50px;top:345.86px;font-size:28.4px;color:#aad428;transform:scaleX(0.6162)">0,00</div><div class="t" style="left:185.50px;top:374.35px;font-size:23px;color:#b8b8b8;transform:scaleX(0.7609)">Acréscimo percentual..%:</div><div class="r" style="left:448.00px;top:373px;width:63.00px;height:24px;background:#0e1032"></div><div class="t" style="left:469.00px;top:369.86px;font-size:28.4px;color:#aad428;transform:scaleX(0.6162)">0,00</div><div class="t" style="left:185.50px;top:398.35px;font-size:23px;color:#b8b8b8;transform:scaleX(0.7609)">Acréscimo(s/imposto)...:</div><div class="r" style="left:448.00px;top:397px;width:94.50px;height:24px;background:#0e1032"></div><div class="t" style="left:500.50px;top:393.86px;font-size:28.4px;color:#aad428;transform:scaleX(0.6162)">0,00</div><div class="t" style="left:185.50px;top:470.35px;font-size:23px;color:#b8b8b8;transform:scaleX(0.7609)">Desconto em valor nota.:</div><div class="r" style="left:448.00px;top:469px;width:94.50px;height:24px;background:#0e1032"></div><div class="t" style="left:500.50px;top:465.86px;font-size:28.4px;color:#aad428;transform:scaleX(0.6162)">0,00</div><div class="t" style="left:185.50px;top:494.35px;font-size:23px;color:#b8b8b8;transform:scaleX(0.7609)">Redução Percentual....%:</div><div class="r" style="left:448.00px;top:493px;width:63.00px;height:24px;background:#0e1032"></div><div class="t" style="left:469.00px;top:489.86px;font-size:28.4px;color:#aad428;transform:scaleX(0.6162)">0,00</div><div class="r" style="left:448px;top:296.5px;width:11px;height:4.5px;background:#f08a30"></div>
</body></html>
